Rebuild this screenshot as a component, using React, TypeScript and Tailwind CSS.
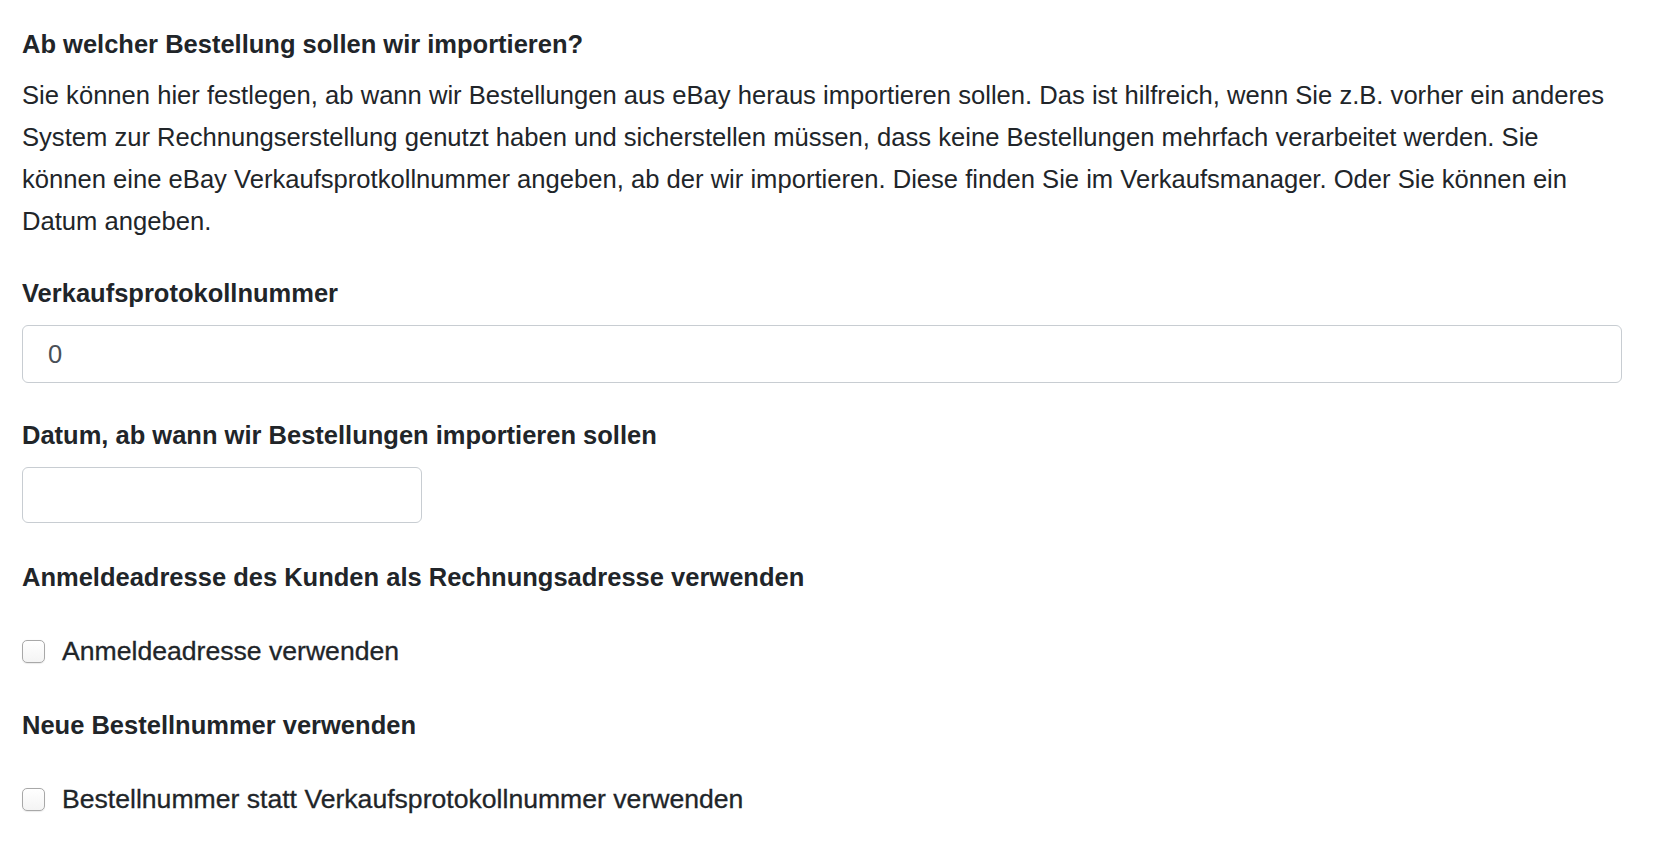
const font = { fontFamily: '"Liberation Sans", Arial, Helvetica, sans-serif' };

function Checkbox({ label }: { label: string }) {
  return (
    <label className="flex items-center h-[32px] gap-[17px]">
      <span className="block w-[23px] h-[23px] shrink-0 rounded-[5px] border border-[#a8a8a8] bg-gradient-to-b from-white to-[#f4f4f4] shadow-[0_0.5px_1px_rgba(0,0,0,0.08)]" />
      <span className="text-[26.6px] leading-[32px] text-[#212529] [-webkit-text-stroke:0.3px_#212529]">{label}</span>
    </label>
  );
}

export default function App() {
  return (
    <main style={font} className="bg-white min-h-[852px] pl-[22px] pt-[28px] text-[#212529]">
      <div className="w-[1600px] flex flex-col">
        <h2 className="text-[25.5px] leading-[32px] font-bold">Ab welcher Bestellung sollen wir importieren?</h2>
        <p className="mt-[14px] text-[25.6px] leading-[42px]">
          Sie können hier festlegen, ab wann wir Bestellungen aus eBay heraus importieren sollen. Das ist hilfreich, wenn Sie z.B. vorher ein anderes System zur Rechnungserstellung genutzt haben und sicherstellen müssen, dass keine Bestellungen mehrfach verarbeitet werden. Sie können eine eBay Verkaufsprotkollnummer angeben, ab der wir importieren. Diese finden Sie im Verkaufsmanager. Oder Sie können ein Datum angeben.
        </p>

        <label className="mt-[35px] text-[25.5px] leading-[32px] font-bold">Verkaufsprotokollnummer</label>
        <input
          defaultValue="0"
          className="mt-[16px] h-[58px] w-full rounded-[6px] border-[1.5px] border-[#c8cdd2] px-[25px] text-[25.5px] text-[#495057] outline-none"
          style={font}
        />

        <label className="mt-[36px] text-[25.5px] leading-[32px] font-bold">Datum, ab wann wir Bestellungen importieren sollen</label>
        <input
          className="mt-[16px] h-[56px] w-[400px] rounded-[6px] border-[1.5px] border-[#c8cdd2] px-[25px] text-[25.5px] text-[#495057] outline-none"
          style={font}
        />

        <div className="mt-[38px] text-[25.5px] leading-[32px] font-bold">Anmeldeadresse des Kunden als Rechnungsadresse verwenden</div>
        <div className="mt-[42px]">
          <Checkbox label="Anmeldeadresse verwenden" />
        </div>

        <div className="mt-[42px] text-[25.5px] leading-[32px] font-bold">Neue Bestellnummer verwenden</div>
        <div className="mt-[42px]">
          <Checkbox label="Bestellnummer statt Verkaufsprotokollnummer verwenden" />
        </div>
      </div>
    </main>
  );
}
